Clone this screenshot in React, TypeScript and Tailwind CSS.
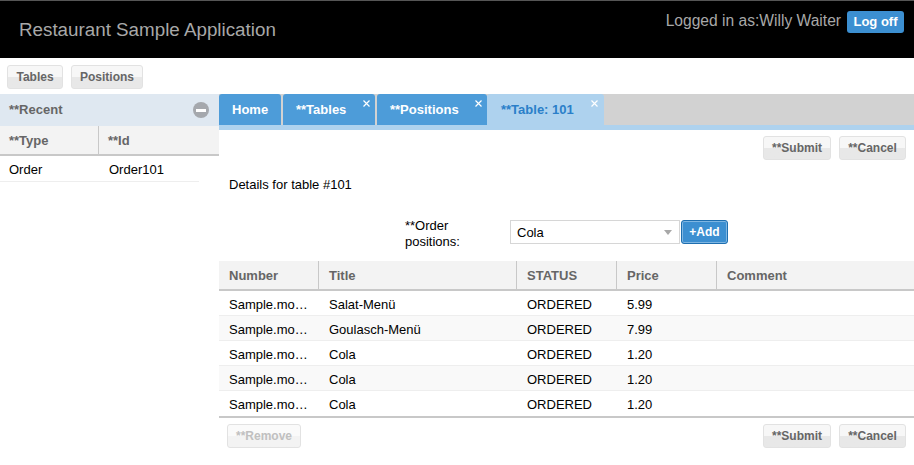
const font = { fontFamily: '"Liberation Sans", Arial, sans-serif' };

function Btn({ children, disabled, className = "" }: { children: React.ReactNode; disabled?: boolean; className?: string }) {
  return (
    <button
      className={`h-[24px] rounded-[3px] border border-[#e2e2e2] bg-gradient-to-b from-50% to-50% text-[12px] font-bold leading-[22px] ${disabled ? "text-[#c0c0c0] from-[#fafafa] to-[#f3f3f3]" : "text-[#666666] from-[#f7f7f7] to-[#e8e8e8]"} ${className}`}
    >
      {children}
    </button>
  );
}

function Tab({ label, w, close, active, pl }: { label: string; w: string; close?: boolean; active?: boolean; pl: string }) {
  return (
    <div className={`relative h-[31px] rounded-t-[3px] text-[13px] font-bold leading-[31px] ${active ? "bg-[#aed2ee] text-[#2a7fc9]" : "bg-[#4d9cd9] text-white"} ${w} ${pl}`}>
      {label}
      {close && <svg className={`absolute top-[5px] ${active ? "right-[5px]" : "right-[4px]"}`} width="9" height="9" viewBox="0 0 9 9"><path d="M1.5 1.5l6 6M7.5 1.5l-6 6" stroke="#ffffff" strokeWidth="1.2" /></svg>}
    </div>
  );
}

const rows = [
  ["Salat-Menü", "5.99"],
  ["Goulasch-Menü", "7.99"],
  ["Cola", "1.20"],
  ["Cola", "1.20"],
  ["Cola", "1.20"],
];

export default function App() {
  return (
    <div className="h-[465px] w-[914px] overflow-hidden bg-white text-[13px] text-black" style={font}>
      <header className="flex h-[58px] justify-between border-t border-[#555555] bg-black">
        <div className="pl-[19px] pt-[17px] text-[18.8px] leading-[23px] text-[#a8a8a8]">Restaurant Sample Application</div>
        <div className="flex items-start gap-[6px] pr-[10px] pt-[10px]">
          <span className="pt-[1px] text-[15.6px] leading-[18px] text-[#a8a8a8]">Logged in as:Willy Waiter</span>
          <button className="h-[22px] w-[57px] rounded-[3px] bg-[#3c8fd1] text-[13px] font-bold leading-[22px] text-white">Log off</button>
        </div>
      </header>
      <div className="flex h-[36px] gap-[8px] pl-[7px] pt-[7px]">
        <Btn className="w-[56px]">Tables</Btn>
        <Btn className="w-[72px]">Positions</Btn>
      </div>
      <div className="flex">
        <aside className="w-[219px]">
          <div className="flex h-[32px] items-center justify-between bg-[#dfe8f1] pl-[9px] pr-[10px] font-bold text-[#666666]">
            <span>**Recent</span>
            <span className="flex h-[16px] w-[16px] items-center justify-center rounded-full bg-[#a5a8ad]"><span className="h-[3px] w-[10px] bg-white" /></span>
          </div>
          <div className="flex h-[30px] border-b-2 border-[#c8c8c8] bg-[#f3f3f3] font-bold leading-[29px] text-[#666666]">
            <div className="w-[99px] border-r border-[#c8c8c8] pl-[9px]">**Type</div>
            <div className="pl-[9px]">**Id</div>
          </div>
          <div className="flex h-[26px] w-[199px] border-b border-[#eeeeee] leading-[27px]">
            <div className="w-[100px] pl-[9px]">Order</div>
            <div className="pl-[9px]">Order101</div>
          </div>
        </aside>
        <main className="w-[695px]">
          <div className="flex h-[36px] border-b-[5px] border-[#aed2ee] bg-[#d2d2d2]">
            <div className="flex gap-[2px]">
              <Tab label="Home" w="w-[62px]" pl="pl-[13px]" />
              <Tab label="**Tables" w="w-[92px]" pl="pl-[13px]" close />
              <div className="flex">
                <Tab label="**Positions" w="w-[110px]" pl="pl-[13px]" close />
                <Tab label="**Table: 101" w="w-[117px]" pl="pl-[14px]" close active />
              </div>
            </div>
          </div>
          <div className="flex justify-end gap-[8px] pr-[8px] pt-[6px]">
            <Btn className="w-[68px]">**Submit</Btn>
            <Btn className="w-[67px]">**Cancel</Btn>
          </div>
          <div className="pl-[10px] pt-[18px] leading-[14px]">Details for table #101</div>
          <div className="mt-[28px] flex h-[34px] items-start">
            <div className="-mt-[2px] ml-[186px] w-[105px] leading-[16px]">**Order<br />positions:</div>
            <div className="flex h-[24px] w-[170px] items-center justify-between border border-[#d6d6d6] pl-[6px] pr-[7px]">
              <span className="pt-px">Cola</span>
              <span className="h-0 w-0 border-x-[4px] border-t-[5px] border-x-transparent border-t-[#a8a8a8]" />
            </div>
            <button className="ml-[1px] h-[24px] w-[47px] rounded-[3px] border border-[#1f6fb0] bg-[#3c8fd1] text-[12px] font-bold text-white shadow-[inset_0_0_0_1px_#7fb6e2]">+Add</button>
          </div>
          <div className="mt-[7px] grid h-[30px] grid-cols-[100px_198px_100px_100px_197px] border-b-2 border-[#c8c8c8] bg-[#f3f3f3] font-bold leading-[29px] text-[#666666]">
            {["Number", "Title", "STATUS", "Price", "Comment"].map((h, i) => (
              <div key={h} className={`pl-[10px] ${i < 4 ? "border-r border-[#c8c8c8]" : ""}`}>{h}</div>
            ))}
          </div>
          <div className="border-b-2 border-[#c8c8c8]">
            {rows.map(([t, p], i) => (
              <div key={i} className={`grid h-[25px] grid-cols-[100px_198px_100px_100px_197px] leading-[28px] ${i % 2 ? "bg-[#f9f9f9]" : "bg-white"} ${i < 4 ? "border-b border-[#eeeeee]" : ""}`}>
                <div className="pl-[10px]">Sample.mo…</div>
                <div className="pl-[10px]">{t}</div>
                <div className="pl-[10px]">ORDERED</div>
                <div className="pl-[10px]">{p}</div>
                <div />
              </div>
            ))}
          </div>
          <div className="flex items-center justify-between pl-[8px] pr-[8px] pt-[6px]">
            <Btn disabled className="w-[74px]">**Remove</Btn>
            <div className="flex gap-[8px]">
              <Btn className="w-[68px]">**Submit</Btn>
              <Btn className="w-[67px]">**Cancel</Btn>
            </div>
          </div>
        </main>
      </div>
    </div>
  );
}
